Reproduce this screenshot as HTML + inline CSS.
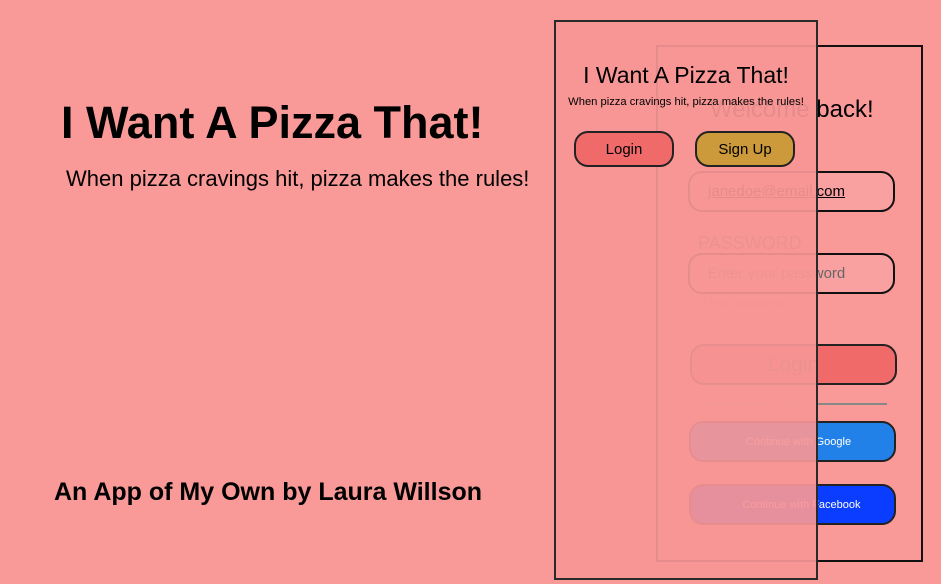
<!DOCTYPE html>
<html><head><meta charset="utf-8"><style>
*{margin:0;padding:0;box-sizing:border-box}
body{width:941px;height:584px;background:#f99a99;position:relative;overflow:hidden;font-family:"Liberation Sans",sans-serif;color:#000}
.a{position:absolute;white-space:nowrap}
.btn{position:absolute;border:2px solid #222;border-radius:14px;display:flex;align-items:center;justify-content:center}
</style></head><body>
<div class="a" style="left:61px;top:97px;font-size:45px;font-weight:bold">I Want A Pizza That!</div>
<div class="a" style="left:66px;top:166px;font-size:22px">When pizza cravings hit, pizza makes the rules!</div>
<div class="a" style="left:54px;top:478px;font-size:25px;font-weight:bold">An App of My Own by Laura Willson</div>

<!-- back panel -->
<div class="a" style="left:656px;top:45px;width:267px;height:517px;border:2px solid #111"></div>
<div class="a" style="left:710px;top:96px;font-size:24px">Welcome back!</div>
<div class="btn" style="left:688px;top:171px;width:207px;height:41px;background:#f9a0a0;border-color:#111"><span style="font-size:15px;text-decoration:underline;margin-left:-30px">janedoe@email.com</span></div>
<div class="a" style="left:698px;top:233px;font-size:18px;color:#555">PASSWORD</div>
<div class="btn" style="left:688px;top:253px;width:207px;height:41px;background:#f9a0a0;border-color:#111"><span style="font-size:15px;color:#666;margin-left:-30px">Enter your password</span></div>
<div class="a" style="left:703px;top:297px;font-size:11px;color:#c77">Forgot password?</div>
<div class="btn" style="left:690px;top:344px;width:207px;height:41px;background:#f06a6a"><span style="font-size:21px;color:#555">Login</span></div>
<div class="a" style="left:696px;top:403px;width:72px;height:1px;background:#aaa"></div>
<div class="a" style="left:815px;top:403px;width:72px;height:2px;background:#888"></div>
<div class="a" style="left:785px;top:396px;font-size:13px;color:#999">or</div>
<div class="btn" style="left:689px;top:421px;width:207px;height:41px;background:#2281e8"><span style="font-size:11px;color:#fff;margin-left:12px">Continue with Google</span></div>
<div class="btn" style="left:689px;top:484px;width:207px;height:41px;background:#0a3dff"><span style="font-size:11px;color:#fff;margin-left:18px">Continue with Facebook</span></div>

<!-- front panel -->
<div class="a" style="left:554px;top:20px;width:264px;height:560px;border:2px solid #2a2a2a;background:rgba(248,150,150,0.93)"></div>
<div class="a" style="left:554px;top:62px;width:264px;text-align:center;font-size:23px">I Want A Pizza That!</div>
<div class="a" style="left:554px;top:96px;width:264px;text-align:center;font-size:11.2px">When pizza cravings hit, pizza makes the rules!</div>
<div class="btn" style="left:574px;top:131px;width:100px;height:36px;background:#f06a6a"><span style="font-size:15px">Login</span></div>
<div class="btn" style="left:695px;top:131px;width:100px;height:36px;background:#cc9a3a"><span style="font-size:15px">Sign Up</span></div>
</body></html>
